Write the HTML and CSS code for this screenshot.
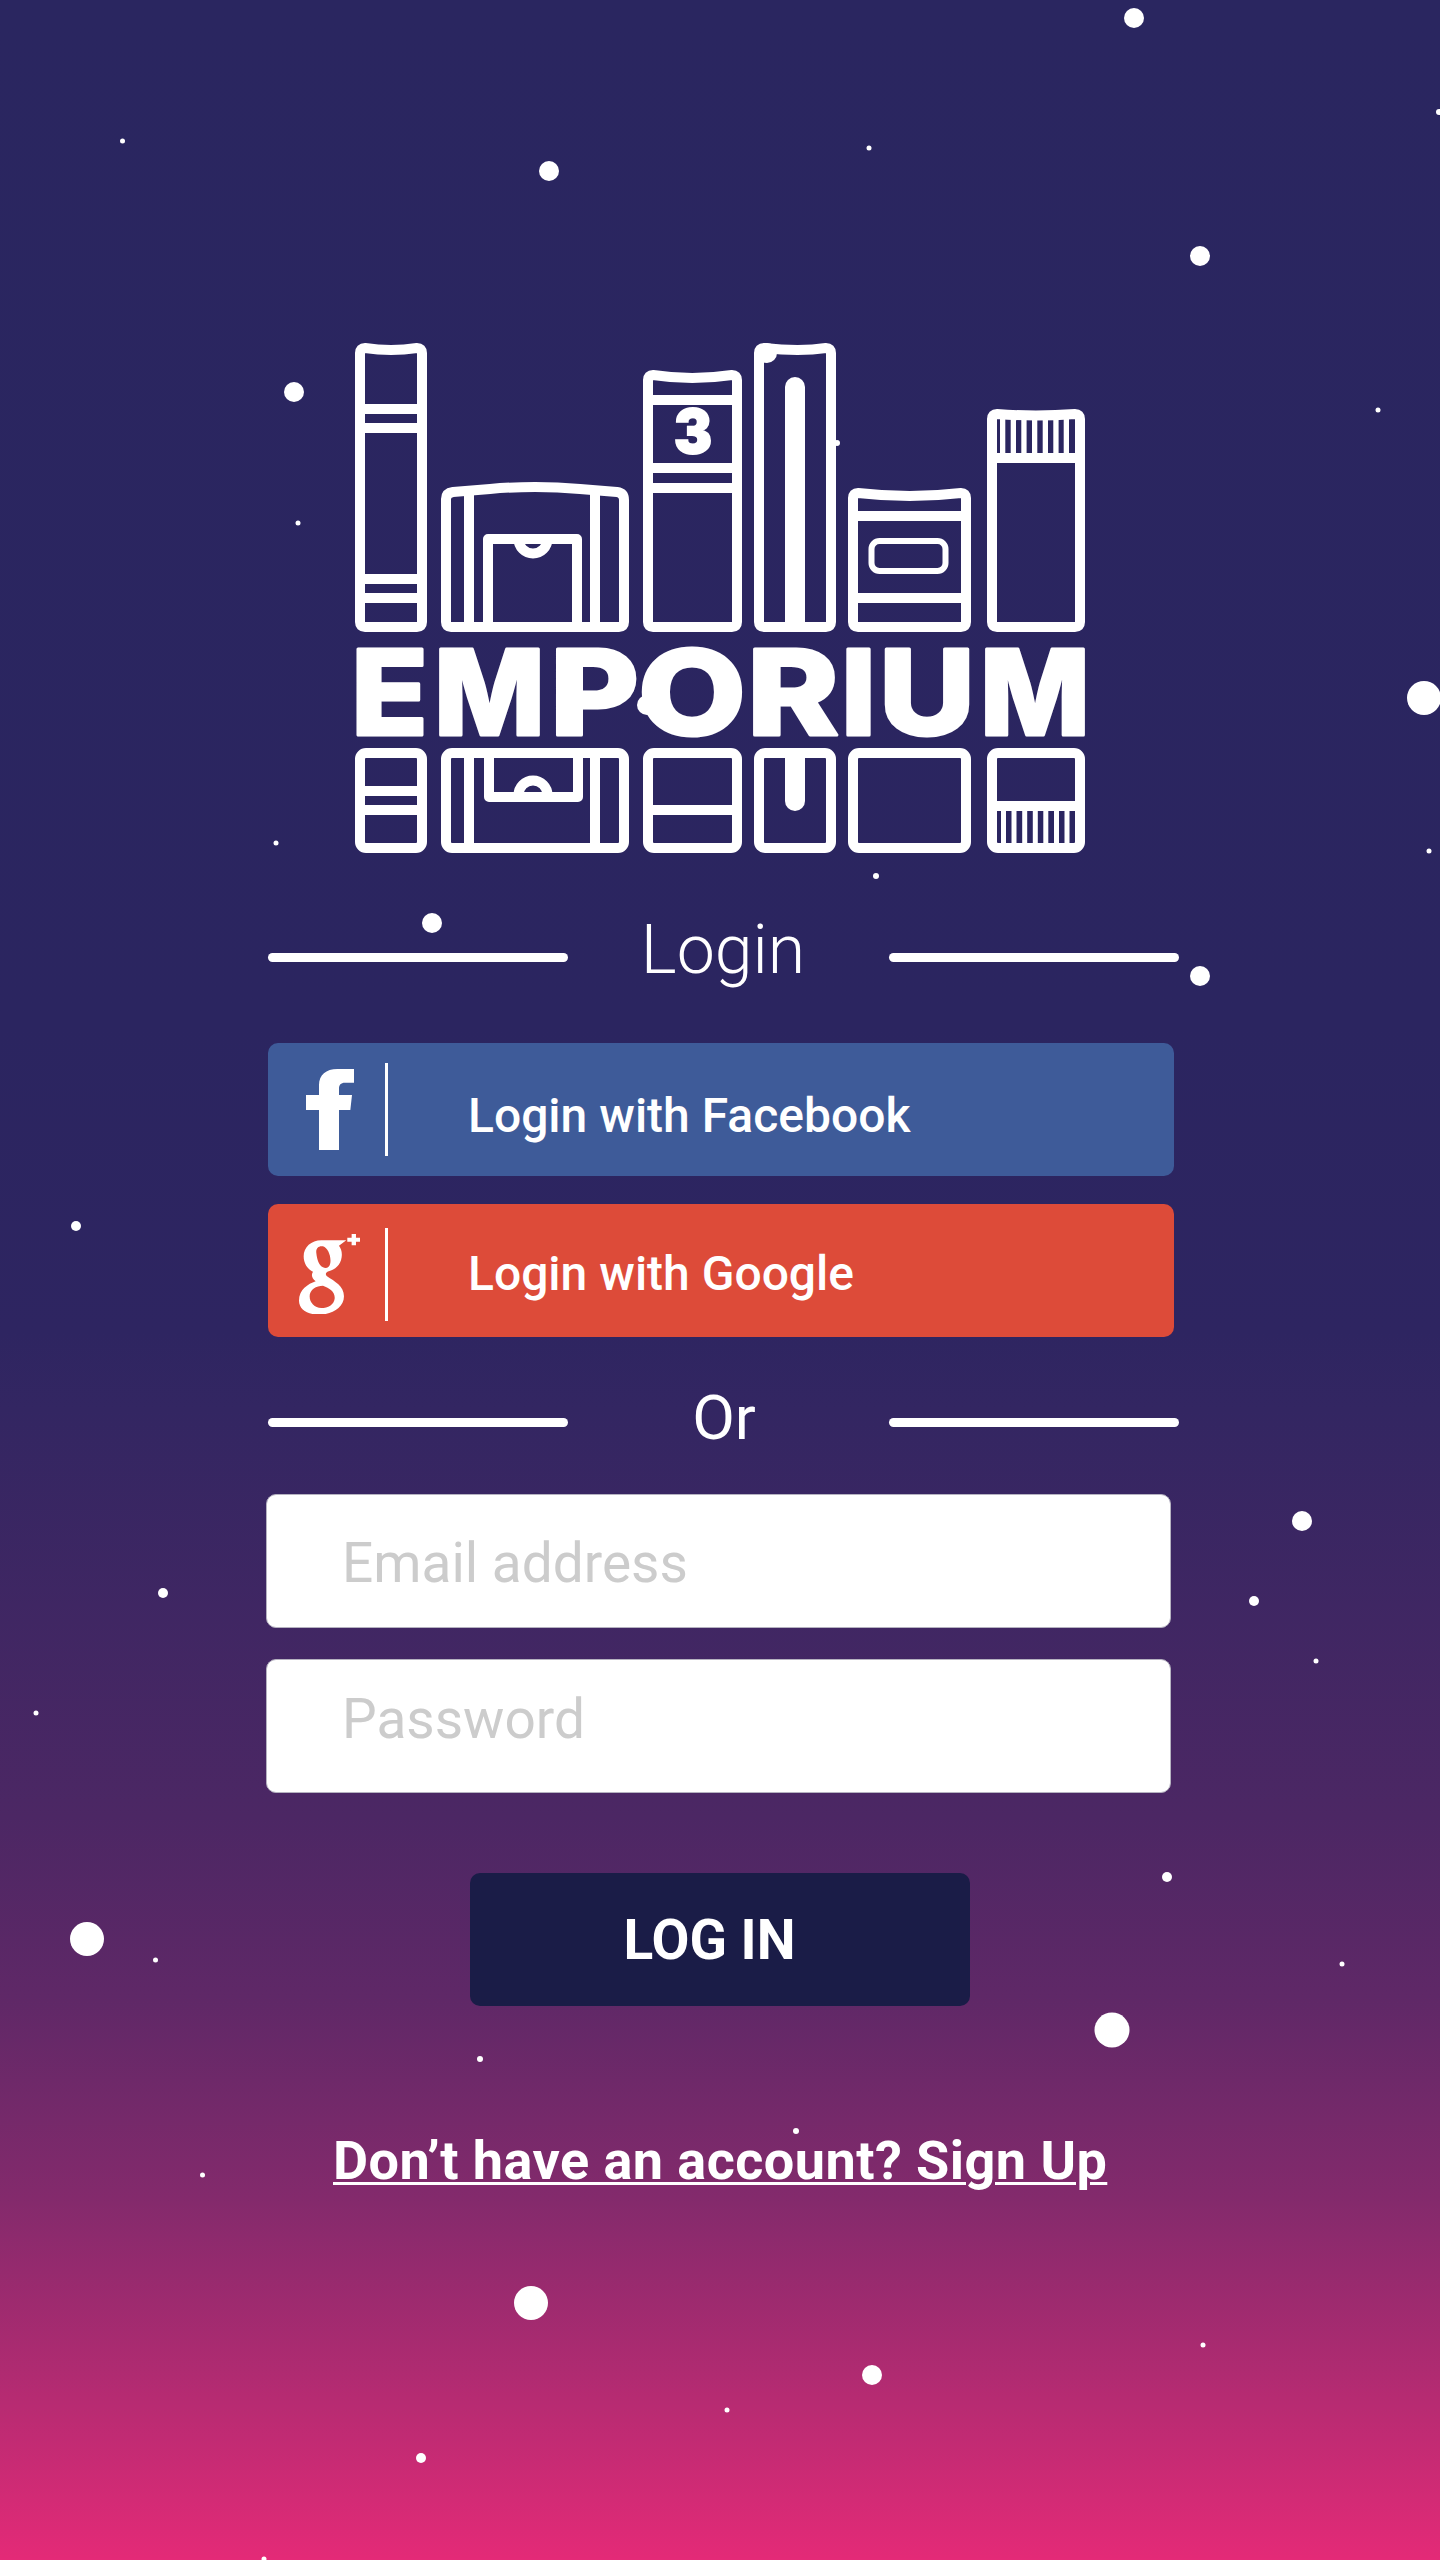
FILE: index.html
```html
<!DOCTYPE html>
<html lang="en">
<head>
<meta charset="utf-8">
<title>Emporium Login</title>
<link rel="stylesheet" href="styles.css">
</head>
<body>
<div class="screen">
  <svg class="stars" viewBox="0 0 1440 2560" width="1440" height="2560" aria-hidden="true">
    <circle cx="1134" cy="18" r="10"/><circle cx="122.500" cy="141" r="2.5"/><circle cx="549" cy="171" r="10"/><circle cx="869" cy="148" r="2.5"/>
    <circle cx="1200" cy="256" r="10"/><circle cx="1439" cy="112" r="3"/><circle cx="294" cy="392" r="10"/><circle cx="1378" cy="410" r="2.5"/>
    <circle cx="298" cy="523" r="2.5"/><circle cx="1424" cy="698" r="17"/><circle cx="276" cy="843" r="2.5"/><circle cx="1429" cy="851" r="2.5"/>
    <circle cx="876" cy="876" r="3"/><circle cx="432" cy="923" r="10"/><circle cx="1200" cy="976" r="10"/><circle cx="76" cy="1226" r="5"/>
    <circle cx="1302" cy="1521" r="10"/><circle cx="163" cy="1593" r="5"/><circle cx="1254" cy="1601" r="5"/><circle cx="1316" cy="1661" r="2.5"/>
    <circle cx="36" cy="1713" r="2.5"/><circle cx="1167" cy="1877" r="5"/><circle cx="87" cy="1939" r="17"/><circle cx="155.500" cy="1960" r="2.5"/>
    <circle cx="1342" cy="1964" r="2.5"/><circle cx="1112" cy="2030" r="17.5"/><circle cx="480" cy="2059" r="3"/><circle cx="796" cy="2131" r="3"/>
    <circle cx="202.500" cy="2175" r="2.5"/><circle cx="531" cy="2303" r="17"/><circle cx="872" cy="2375" r="10"/><circle cx="1203" cy="2345" r="2.5"/>
    <circle cx="727" cy="2410" r="2.5"/><circle cx="421" cy="2458" r="5"/><circle cx="264" cy="2559" r="2.5"/>
  </svg>

  <svg class="logo" viewBox="350 338 741 520" width="741" height="520" role="img" aria-label="Emporium">
    <g class="logo-lines">
      <path d="M365 348Q391 352 417 348Q422 348 422 353V622Q422 627 417 627H365Q360 627 360 622V353Q360 348 365 348Z"/>
      <path d="M360 409H422M360 428H422M360 579H422M360 598H422"/>
      <path d="M453 492L490 489Q535 485 580 489L617 492Q624 493 624 500V622Q624 627 619 627H451Q446 627 446 622V499Q446 493 453 492Z"/>
      <path d="M469 490V627M595 490V627"/>
      <path d="M488 627V539H577V627"/>
      <path d="M518.5 539A14.5 14.5 0 0 0 547.5 539"/>
      <path d="M653 375Q692 381 732 375Q737 375 737 380V622Q737 627 732 627H653Q648 627 648 622V380Q648 375 653 375Z"/>
      <path d="M648 400H737M648 468H737M648 488H737"/>
      <path d="M764 348Q800 352 826 348Q831 348 831 353V622Q831 627 826 627H764Q759 627 759 622V353Q759 348 764 348Z"/>
      <path d="M858 493Q910 499 961 493Q966 493 966 498V622Q966 627 961 627H858Q853 627 853 622V498Q853 493 858 493Z"/>
      <path d="M853 516H966M853 598H966"/>
      <path d="M997 414Q1036 417 1075 414Q1080 414 1080 419V622Q1080 627 1075 627H997Q992 627 992 622V419Q992 414 997 414Z"/>
      <path d="M992 458H1080"/>

      <rect x="360" y="753" width="62" height="95" rx="6"/>
      <path d="M360 791H422M360 810H422"/>
      <rect x="446" y="753" width="178" height="95" rx="6"/>
      <path d="M469 753V848M595 753V848"/>
      <path d="M489 753V797H578V753"/>
      <path d="M518.5 795A14.5 14.5 0 0 1 547.5 795"/>
      <rect x="648" y="753" width="89" height="95" rx="6"/>
      <path d="M648 810H737"/>
      <rect x="759" y="753" width="72" height="95" rx="6"/>
      <rect x="853" y="753" width="113" height="95" rx="6"/>
      <rect x="992" y="753" width="88" height="95" rx="6"/>
      <path d="M992 806H1080"/>
    </g>
    <rect class="logo-label" x="871.500" y="541" width="74" height="30" rx="8"/>
    <g class="logo-solid">
      <path d="M785 632V387A10 10 0 0 1 805 387V632Z"/>
      <path d="M785 748V801A10 10 0 0 0 805 801V748Z"/>
      <path d="M1000 419h5.300v36h-5.300zM1010.700 419h5.300v36h-5.300zM1021.300 419h5.300v36h-5.300zM1032 419h5.300v36h-5.300zM1042.700 419h5.300v36h-5.300zM1053.300 419h5.300v36h-5.300zM1063.700 419h5.300v36h-5.300z"/>
      <path d="M1001 809h5v36h-5zM1011.500 809h5v36h-5zM1022.200 809h5v36h-5zM1032.800 809h5v36h-5zM1043.300 809h5v36h-5zM1054 809h5v36h-5zM1064.500 809h5v36h-5z"/>
      <circle cx="767" cy="353" r="10"/>
      <circle cx="647" cy="705" r="10"/>
      <circle cx="837" cy="443" r="3"/>
      <text class="logo-digit" x="693" y="453" text-anchor="middle" textLength="38" lengthAdjust="spacingAndGlyphs">3</text>
      <text class="logo-word" y="734.500"><tspan x="351" textLength="77" lengthAdjust="spacingAndGlyphs">E</tspan><tspan x="434" textLength="111" lengthAdjust="spacingAndGlyphs">M</tspan><tspan x="550" textLength="89" lengthAdjust="spacingAndGlyphs">P</tspan><tspan x="638" textLength="108" lengthAdjust="spacingAndGlyphs">O</tspan><tspan x="747" textLength="92" lengthAdjust="spacingAndGlyphs">R</tspan><tspan x="841" textLength="35" lengthAdjust="spacingAndGlyphs">I</tspan><tspan x="879" textLength="96" lengthAdjust="spacingAndGlyphs">U</tspan><tspan x="980" textLength="110" lengthAdjust="spacingAndGlyphs">M</tspan></text>
    </g>
  </svg>

  <div class="rule-row rule-login">
    <span class="rule"></span>
    <span class="rule-label rule-label-login">Login</span>
    <span class="rule"></span>
  </div>

  <a class="social social-fb" href="#">
    <span class="social-icon">
      <svg class="icon-f" viewBox="168 117 144 243" width="48" height="81" aria-hidden="true"><path d="M207 360V240H168V195H207V165C207 135 228 117 262 117H312V158H285C272 158 267 165 267 175V195H306L301 240H267V360Z"/></svg>
    </span>
    <span class="social-sep"></span>
    <span class="social-text">Login with Facebook</span>
  </a>
  <a class="social social-g" href="#">
    <span class="social-icon">
      <svg class="icon-g" viewBox="28 28 184 242" width="61.300" height="80.700" aria-hidden="true"><path fill-rule="evenodd" d="M170 47L148 63C155 72 158 84 156 98C153 122 136 135 117 140C108 143 106 150 112 155C135 170 163 185 163 215C163 250 125 270 88 270C55 270 28 255 28 228C28 195 55 178 78 170C66 160 64 150 70 141C52 133 42 115 42 95C42 68 65 47 95 47ZM80 85C78 70 88 62 100 65C115 70 125 95 122 115C120 128 110 133 100 128C88 122 82 105 80 85ZM60 215C60 195 80 183 100 183C120 190 137 202 135 222C133 240 115 250 95 250C75 250 60 235 60 215Z"/><path d="M186 28H199V39H212V51H199V62H186V51H173V39H186Z"/></svg>
    </span>
    <span class="social-sep"></span>
    <span class="social-text">Login with Google</span>
  </a>

  <div class="rule-row rule-or">
    <span class="rule"></span>
    <span class="rule-label rule-label-or">Or</span>
    <span class="rule"></span>
  </div>

  <form class="form">
    <input class="field field-email" type="email" placeholder="Email address">
    <input class="field field-password" type="password" placeholder="Password">
    <button class="submit" type="button">LOG IN</button>
  </form>

  <a class="signup" href="#">Don’t have an account? Sign Up</a>
</div>
</body>
</html>
```

FILE: styles.css
```css
* { box-sizing: border-box; }
html, body { margin: 0; padding: 0; }
body { font-family: Roboto, "Liberation Sans", sans-serif; color: #fff; }

.screen {
  position: relative;
  width: 1440px;
  height: 2560px;
  overflow: hidden;
  padding-top: 338px;
  display: flex;
  flex-direction: column;
  background: linear-gradient(180deg, #2a2660 0%, #2b2560 40%, #2e2561 52%, #332662 55%, #4c2764 71%, #5f2867 78%, #842a6c 86%, #b82b72 94%, #e42a77 100%);
}

.stars { position: absolute; left: 0; top: 0; fill: #fff; }

.logo { position: relative; display: block; margin-left: 350px; flex: none; }
.logo-lines { fill: none; stroke: #fff; stroke-width: 10; stroke-linejoin: round; }
.logo-label { fill: none; stroke: #fff; stroke-width: 6; }
.logo-solid { fill: #fff; }
.logo-word {
  font-family: Inter, Roboto, sans-serif;
  font-weight: 800;
  font-size: 118px;
  stroke: #fff;
  stroke-width: 3;
  stroke-linejoin: round;
}
.logo-digit { font-family: Inter, Roboto, sans-serif; font-weight: 900; font-size: 60px; stroke: #fff; stroke-width: 2; }

.rule-row {
  position: relative;
  display: grid;
  grid-template-columns: 300px 321px 290px;
  margin-left: 268px;
  width: 911px;
  height: 92px;
  align-items: center;
  flex: none;
}
.rule-login { margin-top: 46px; margin-bottom: 47px; }
.rule-or { margin-top: 35px; margin-bottom: 30px; }
.rule { display: block; height: 9px; border-radius: 5px; background: #fff; }
.rule-login .rule { margin-top: 15px; }
.rule-or .rule { margin-top: 9px; }
.rule-label {
  text-align: center;
  line-height: 92px;
}
.rule-label-login { font-weight: 300; font-size: 68px; padding-right: 11px; }
.rule-label-or { font-weight: 400; font-size: 62px; padding-right: 9px; }

.social {
  position: relative;
  display: flex;
  align-items: center;
  width: 906px;
  height: 133px;
  margin-left: 268px;
  border-radius: 10px;
  color: #fff;
  text-decoration: none;
  flex: none;
}
.social-fb { background: #3e5b99; margin-bottom: 28px; }
.social-g { background: #dd4b39; }
.social-icon { display: flex; align-items: center; width: 117px; flex: none; }
.icon-f { margin-left: 38px; fill: #fff; }
.icon-g { margin: 7px 0 0 31px; fill: #fff; }
.social-sep { display: block; width: 3px; height: 93px; background: #fff; flex: none; }
.social-g .social-sep { margin-top: 8px; }
.social-text { padding-left: 80px; font-weight: 500; font-size: 48px; line-height: 56px; }
.social-fb .social-text { padding-top: 12px; }
.social-g .social-text { padding-top: 6px; }

.form { display: flex; flex-direction: column; align-items: flex-start; margin-left: 266px; }
.field {
  display: block;
  width: 905px;
  height: 134px;
  border: 1px solid #b5b2c0;
  border-radius: 10px;
  background: #fff;
  padding: 0 0 0 75px;
  font-family: Roboto, sans-serif;
  font-size: 55px;
  color: #333;
  outline: none;
}
.field::placeholder { color: #ccc; opacity: 1; }
.field-email { padding-top: 3px; }
.field-password { margin-top: 31px; padding-bottom: 15px; }
.submit {
  display: block;
  width: 500px;
  height: 133px;
  margin: 80px 0 0 204px;
  padding: 0 21px 0 0;
  border: 0;
  border-radius: 10px;
  background: #1a1c47;
  color: #fff;
  font-family: Roboto, sans-serif;
  font-weight: 700;
  font-size: 55px;
}
.signup {
  position: relative;
  align-self: flex-start;
  margin: 123px 0 0 333px;
  font-weight: 700;
  font-size: 54px;
  line-height: 64px;
  letter-spacing: 0.45px;
  color: #fff;
  text-decoration: underline;
  text-decoration-thickness: 3px;
  text-underline-offset: 3px;
}
```
